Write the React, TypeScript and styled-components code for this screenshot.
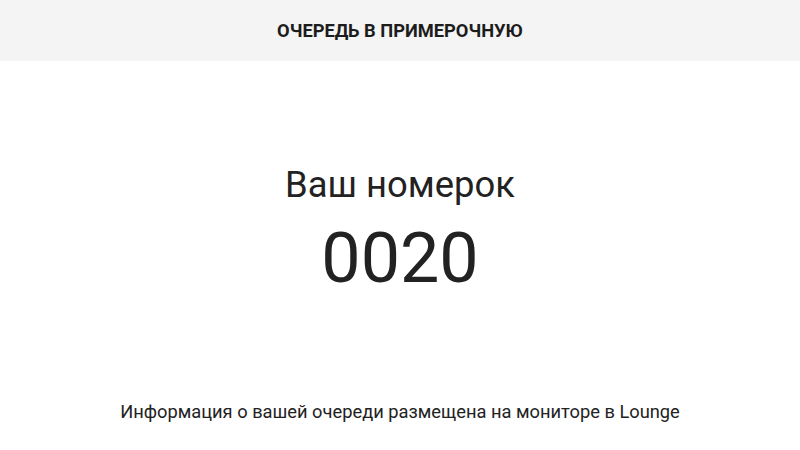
import React from "react";
import styled, { createGlobalStyle } from "styled-components";

const Global = createGlobalStyle`
  html, body { margin: 0; padding: 0; background: #ffffff; }
  body { font-family: Roboto, "Noto Sans", sans-serif; color: #222222; }
`;

const Page = styled.div`
  width: 800px;
  height: 450px;
  display: flex;
  flex-direction: column;
  background: #ffffff;
`;

const Header = styled.header`
  height: 61px;
  background: #f4f4f4;
  display: flex;
  align-items: center;
  justify-content: center;
`;

const HeaderTitle = styled.h1`
  margin: 0;
  font-size: 18.3px;
  line-height: 22px;
  font-weight: 700;
  color: #1c1c1c;
  letter-spacing: 0;
`;

const Main = styled.main`
  flex: 1;
  display: flex;
  flex-direction: column;
  align-items: center;
`;

const Label = styled.div`
  margin-top: 104px;
  font-size: 36.4px;
  line-height: 40px;
  color: #222222;
`;

const Number = styled.div`
  margin-top: 18px;
  font-size: 70px;
  line-height: 70px;
  color: #222222;
`;

const Info = styled.div`
  margin-top: 108px;
  font-size: 18.3px;
  line-height: 22px;
  color: #222222;
`;

export default function App() {
  return (
    <Page>
      <Global />
      <Header>
        <HeaderTitle>ОЧЕРЕДЬ В ПРИМЕРОЧНУЮ</HeaderTitle>
      </Header>
      <Main>
        <Label>Ваш номерок</Label>
        <Number>0020</Number>
        <Info>Информация о вашей очереди размещена на мониторе в Lounge</Info>
      </Main>
    </Page>
  );
}
